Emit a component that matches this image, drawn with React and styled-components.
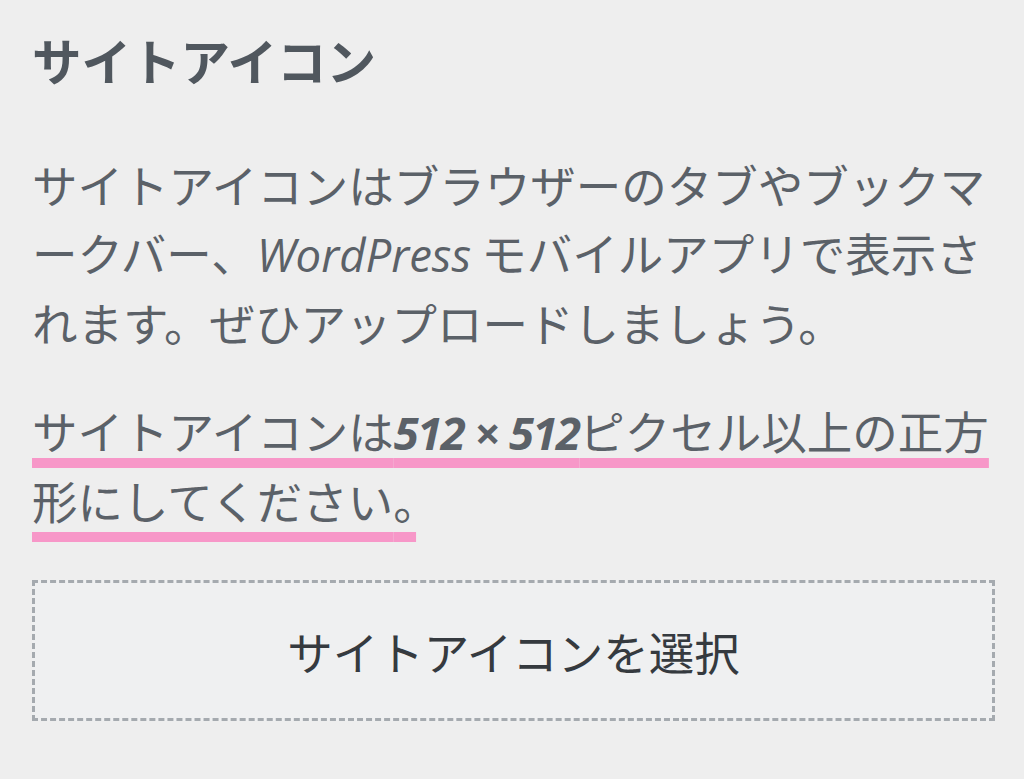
import React from "react";
import styled, { createGlobalStyle } from "styled-components";

const Global = createGlobalStyle`
  html, body {
    margin: 0;
    padding: 0;
    background: #eeeeee;
  }
  body {
    font-family: "Noto Sans CJK JP", "Noto Sans", sans-serif;
  }
`;

const Panel = styled.section`
  width: 1024px;
  height: 779px;
  box-sizing: border-box;
  padding: 28px 28px 0 32px;
  background: #eeeeee;
  color: #555d66;
  display: flex;
  flex-direction: column;
`;

const Title = styled.h2`
  margin: 0;
  font-size: 49.5px;
  font-weight: 700;
  line-height: 64px;
  color: #50575e;
`;

const Description = styled.p`
  margin: ${(p) => p.$top}px 0 0;
  font-size: 45.5px;
  font-weight: 400;
  line-height: 68px;
  white-space: nowrap;
  color: #5b6168;
`;

const Line = styled.span`
  display: block;
`;

const Latin = styled.span`
  font-family: "Open Sans", "Noto Sans", sans-serif;
  font-style: italic;
  font-weight: ${(p) => (p.$bold ? 700 : 400)};
  letter-spacing: ${(p) => (p.$bold ? "-1.6px" : "0")};
`;

const Punct = styled.span`
  font-feature-settings: "halt";
`;

const Marked = styled.span`
  text-decoration-line: underline;
  text-decoration-color: #f797c8;
  text-decoration-thickness: 10px;
  text-underline-offset: ${(p) => p.$offset}px;
  text-decoration-skip-ink: none;
`;

const SelectButton = styled.button`
  margin-top: 46px;
  width: 963px;
  height: 141px;
  box-sizing: border-box;
  border: 3px dashed #a5aaaf;
  background: #eff0f1;
  color: #353a3f;
  font-family: "Noto Sans CJK JP", "Noto Sans", sans-serif;
  font-size: 45.5px;
  font-weight: 400;
  cursor: pointer;
  display: flex;
  align-items: center;
  justify-content: center;
  padding: 0;
`;

export default function App() {
  return (
    <>
      <Global />
      <Panel>
        <Title>サイトアイコン</Title>
        <Description $top={58}>
          <Line>サイトアイコンはブラウザーのタブやブックマ</Line>
          <Line>
            ークバー、<Latin>WordPress</Latin> モバイルアプリで表示さ
          </Line>
          <Line>れます。ぜひアップロードしましょう。</Line>
        </Description>
        <Description $top={40}>
          <Line>
            <Marked $offset={8}>
              サイトアイコンは<Latin $bold>512 × 512</Latin>ピクセル以上の正方
            </Marked>
          </Line>
          <Line>
            <Marked $offset={12}>
              形にしてください<Punct>。</Punct>
            </Marked>
          </Line>
        </Description>
        <SelectButton type="button">サイトアイコンを選択</SelectButton>
      </Panel>
    </>
  );
}
